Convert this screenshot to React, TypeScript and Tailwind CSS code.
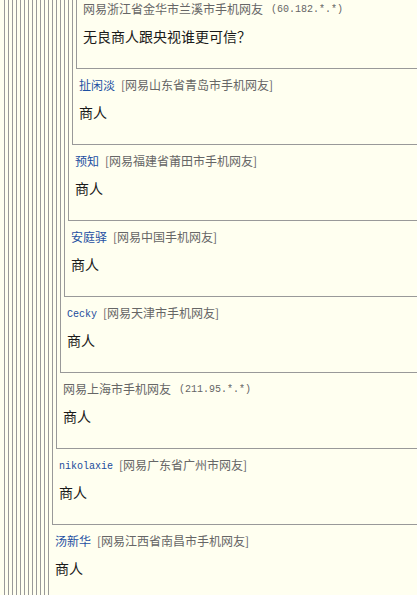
import React from 'react';

interface Floor {
  name?: string;
  ascii?: boolean;
  from: string;
  ip?: string;
  text: string;
}

// innermost floor first (level 19 down to level 12)
const FLOORS: { [level: number]: Floor } = {
  19: { from: '网易浙江省金华市兰溪市手机网友', ip: '(60.182.*.*)', text: '无良商人跟央视谁更可信？' },
  18: { name: '扯闲淡', from: '[网易山东省青岛市手机网友]', text: '商人' },
  17: { name: '预知', from: '[网易福建省莆田市手机网友]', text: '商人' },
  16: { name: '安庭驿', from: '[网易中国手机网友]', text: '商人' },
  15: { name: 'Cecky', ascii: true, from: '[网易天津市手机网友]', text: '商人' },
  14: { from: '网易上海市手机网友', ip: '(211.95.*.*)', text: '商人' },
  13: { name: 'nikolaxie', ascii: true, from: '[网易广东省广州市网友]', text: '商人' },
  12: { name: '汤新华', from: '[网易江西省南昌市手机网友]', text: '商人' },
};

const MAX_LEVEL = 19;

const FloorBody = ({ floor }: { floor?: Floor }) => {
  if (!floor) return <div className="h-[76px]" />;
  return (
    <div>
      <div className="mt-[6px] flex h-[20px] items-center pl-[3px] text-[12px] whitespace-nowrap text-[#666]">
        {floor.name && (
          <span
            className={
              floor.ascii
                ? "mr-[6px] pt-[3px] font-['Liberation_Mono',monospace] text-[10px] leading-none text-[#1a4b9c]"
                : 'mr-[6px] leading-none text-[#1e50a2]'
            }
          >
            {floor.name}
          </span>
        )}
        <span className="leading-none">{floor.from}</span>
        {floor.ip && (
          <span className="ml-[8px] pt-[2px] font-['Liberation_Mono',monospace] text-[10px] leading-none text-[#666]">
            {floor.ip}
          </span>
        )}
      </div>
      <div className="mt-[7px] flex h-[20px] items-center pl-[3px] text-[14px] whitespace-nowrap text-[#1a1a1a]">
        <span className="leading-none">{floor.text}</span>
      </div>
      <div className="h-[22px]" />
    </div>
  );
};

const Box = ({ level }: { level: number }) => {
  const innermost = level === MAX_LEVEL;
  return (
    <div className={`border border-[#999] px-[3px] ${innermost ? 'pt-0' : 'pt-[3px]'}`}>
      {!innermost && <Box level={level + 1} />}
      <FloorBody floor={FLOORS[level]} />
    </div>
  );
};

export default function App() {
  return (
    <div className="h-[595px] w-full overflow-hidden bg-[#fffff0] font-['Noto_Sans_CJK_SC','Noto_Sans',sans-serif]">
      <div className="-mt-[80px] w-[640px] pl-[4px]">
        <Box level={1} />
      </div>
    </div>
  );
}
